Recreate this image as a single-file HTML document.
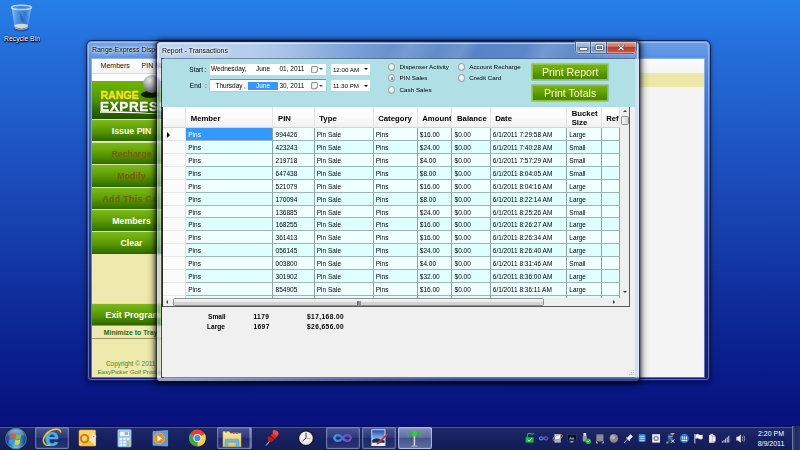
<!DOCTYPE html>
<html>
<head>
<meta charset="utf-8">
<title>Report - Transactions</title>
<style>
*{box-sizing:border-box;margin:0;padding:0}
html,body{width:800px;height:450px;overflow:hidden;background:#0b0f78}
body{font-family:"Liberation Sans",sans-serif;position:relative}
.abs{position:absolute}
#desk{position:absolute;left:0;top:0;width:800px;height:450px;overflow:hidden;
 background:linear-gradient(to bottom,#277fe8 0px,#246eda 50px,#205fcc 110px,#1b4ebc 170px,#1640ae 230px,#102f9d 290px,#0b208f 350px,#081682 400px,#08107c 426px)}
/* ---------- back window ---------- */
#w1{left:87px;top:41px;width:623px;height:340px;border-radius:5px 5px 3px 3px;
 background:linear-gradient(to bottom,#6a9fe8 0px,#5890e2 18px,#4179d3 60px,#2c5cbc 130px,#1e3fa2 200px,#14288c 270px,#0e1a7e 340px);
 box-shadow:0 0 0 1px rgba(10,20,70,.75),0 1px 5px 1px rgba(0,0,20,.45)}
#w1:before{content:"";position:absolute;left:1px;top:1px;right:1px;bottom:1px;border-radius:4px 4px 3px 3px;border:1px solid rgba(255,255,255,.35)}
.ttl{left:5px;top:4.5px;font-size:6.9px;color:#000;white-space:nowrap;text-shadow:0 0 5px #fff,0 0 3px rgba(255,255,255,.95),0 0 8px rgba(255,255,255,.85),0 0 2px rgba(255,255,255,.8)}
#c1{left:5px;top:18px;width:612px;height:318px;background:#f4f4f4;overflow:hidden;box-shadow:0 0 0 .8px rgba(225,235,255,.5)}
.mn{font-size:7px;color:#111;white-space:nowrap;line-height:8px}
#side{left:0;top:13.6px;width:80px;height:305px;background:#efe9ad;overflow:hidden}
#logo{left:0;top:8.4px;width:80px;height:37.8px;background:linear-gradient(to bottom,#6fb400 0,#5fa800 25%,#4a8c00 55%,#2f6400 80%,#245200 100%);overflow:hidden}
.sb{left:0;width:80px;height:22.8px;overflow:hidden;border-top:1.1px solid #d6e8a0;background:linear-gradient(to bottom,#7cb81e 0,#6aa80a 30%,#579600 55%,#3f7c00 80%,#2f6600 100%);color:#fff;font-weight:bold;font-size:8.8px;line-height:23.2px;text-align:center;white-space:nowrap;padding-right:1px}
.sb.dis{color:#7a5c12}
/* ---------- front window ---------- */
#w2{left:157px;top:42px;width:482px;height:339px;border-radius:4px 4px 3px 3px;
 box-shadow:0 0 0 .8px rgba(15,20,45,.6),0 1px 7px 3px rgba(0,0,10,.5),0 0 3px 1.5px rgba(0,0,10,.5)}
.gl{position:absolute;overflow:hidden}
#gt{left:0;top:0;width:482px;height:17px;border-radius:4px 4px 0 0;
 background:linear-gradient(to right,#b9d0ec 0,#b6ceeb 95px,#a4c0e6 135px,#84a8da 180px,#6790cc 235px,#5783c4 300px,#5d88c8 380px,#628cca 430px,#7a9fd6 482px)}
#gt:before{content:"";position:absolute;left:0;top:0;right:0;bottom:0;
 background:linear-gradient(115deg,rgba(255,255,255,0) 0,rgba(255,255,255,0) 48%,rgba(255,255,255,.13) 52%,rgba(255,255,255,.04) 58%,rgba(255,255,255,.15) 63%,rgba(255,255,255,0) 66%,rgba(255,255,255,0) 76%,rgba(255,255,255,.14) 80%,rgba(255,255,255,0) 86%)}
#gt:after{content:"";position:absolute;left:.8px;top:.8px;right:.8px;bottom:0;border-radius:3.4px 3.4px 0 0;border:.9px solid rgba(255,255,255,.6);border-bottom:0}
#gl{left:0;top:17px;width:4px;height:318px;background:rgba(175,195,215,.5);backdrop-filter:blur(1.8px);-webkit-backdrop-filter:blur(1.8px);border-left:.9px solid rgba(255,255,255,.2)}
#gl:after{content:"";position:absolute;left:1.6px;top:0;width:1.4px;height:100%;background:rgba(255,255,255,.28)}
#gr{left:478.2px;top:17px;width:3.8px;height:318px;background:linear-gradient(to right,#c2d8f2,#d4e6fa 45%,#cfe2f8 80%,#b8d0ee);border-right:.6px solid rgba(255,255,255,.4)}
#gb{left:0;top:334.4px;width:482px;height:4.6px;border-radius:0 0 3px 3px;background:linear-gradient(to right,rgba(255,255,255,.5) 0,rgba(255,255,255,.3) 110px,rgba(255,255,255,.08) 220px,rgba(255,255,255,0) 300px),linear-gradient(to bottom,#f2f6fb 0,#c3d0e8 15%,#6e83bc 38%,#33458c 64%,#27367c 86%,#7888c0 100%)}
#c2{left:5px;top:17px;width:473px;height:318px;background:#f0f0f0;overflow:hidden}
#c2b{left:3.9px;top:16.2px;width:474.6px;height:319.4px;background:linear-gradient(to right,rgba(10,20,20,.72) 0,rgba(10,20,20,.72) 3px,rgba(60,80,110,.55) 3px,rgba(60,80,110,.55) 100%)}
#pan{left:0;top:0;width:473px;height:47.5px;background:#b0e0e6}
.lb{font-size:6.5px;color:#000;white-space:nowrap;line-height:8px}
.dt{background:#fff;height:10.5px;font-size:6.5px;line-height:10.5px;color:#000;white-space:nowrap}
.dt span{position:absolute;top:0}
.rad{width:7.4px;height:7.4px;border-radius:50%;border:.8px solid #9a9c9c;background:radial-gradient(circle at 50% 40%,#fdfdfd 0,#e6e6e6 60%,#cfcfcf 100%)}
.rad.on:after{content:"";position:absolute;left:1.5px;top:1.5px;width:2.8px;height:2.8px;border-radius:50%;background:radial-gradient(circle at 40% 35%,#7fd4f5 0,#1c6fb5 70%,#13406b 100%)}
.btn{left:370px;width:76.3px;height:16.2px;background:linear-gradient(to bottom,#78b010 0,#6aa606 35%,#589600 60%,#4b8600 100%);border:.6px solid #8ec43a;
 color:#ffffc8;font-size:10.6px;line-height:15px;text-align:center;white-space:nowrap;box-shadow:0 0 0 .5px rgba(70,110,0,.5)}
#cap{left:418.6px;top:0;width:60px;height:10.6px;border-radius:0 0 3.5px 3.5px;box-shadow:0 0 0 .8px rgba(40,50,80,.8),0 0 0 1.5px rgba(255,255,255,.35)}
.cb{top:0;height:10.6px;background:linear-gradient(to bottom,#b4c8e6 0,#93aed6 45%,#6f8fc0 50%,#8eabd6 100%);border-right:.8px solid rgba(40,50,80,.7);box-shadow:inset 0 0 0 .7px rgba(255,255,255,.5)}
.cb.cx{background:linear-gradient(to bottom,#dca094 0,#cf6f62 45%,#b93a2e 50%,#c55c48 100%);border-right:0}
.th{border:.7px solid #8f8f8f;border-radius:1.5px;background:linear-gradient(to right,#f6f6f6 0,#e6e6e6 50%,#d2d2d2 100%)}
.th.h{background:linear-gradient(to bottom,#f8f8f8 0,#e9e9e9 45%,#d6d6d6 55%,#cfcfcf 100%)}
/* grid */
#grid{left:-.5px;top:48.2px;width:468.7px;height:200.3px;background:#fff;border:.9px solid #5a5a5a;border-left-color:#2a2a2a;border-top:0;overflow:hidden}
#gin{left:0;top:0;width:457.7px;height:190.4px;overflow:hidden}
.hdr{background:linear-gradient(to bottom,#fff 0,#fbfbfb 50%,#f0f0f0 100%);border-bottom:.7px solid #d5d5d5}
.hc{top:0;height:21.1px;font-weight:bold;font-size:7.75px;line-height:23.6px;padding-left:4.6px;color:#000;white-space:nowrap;border-right:.7px solid #e3e3e3;overflow:hidden}
.hc.two{line-height:8.8px;padding-top:2.9px}
.row{left:0;width:457.7px;height:12.88px}
.row .c{position:absolute;top:0;height:12.88px;font-size:6.5px;line-height:13.9px;padding-left:2.2px;white-space:nowrap;overflow:hidden;color:#000;border-right:.65px solid #8fa3a3;border-bottom:.6px solid #9fb4b4}
.ra .c{background:#f0ffff}
.rb .c{background:#e0ffff}
.row .c.rh{background:#fbfbfb;border-right:.7px solid #e0e0e0;border-bottom:.7px solid #e6e6e6}
.row .c.sel{background:#3399ff;color:#fff}
.cur{position:absolute;left:3.6px;top:3.4px;width:0;height:0;border-left:3.6px solid #000;border-top:3px solid transparent;border-bottom:3px solid transparent}
.tot{font-size:6.6px;font-weight:bold;color:#000;white-space:nowrap;line-height:8px}
.tb{top:.6px;height:22.8px;border:.8px solid rgba(150,165,215,.55);border-radius:2px;background:linear-gradient(to bottom,rgba(150,165,220,.36) 0,rgba(110,125,190,.26) 48%,rgba(60,75,145,.22) 52%,rgba(90,110,180,.28) 100%);box-shadow:inset 0 0 0 .6px rgba(255,255,255,.14)}
.tb.act{background:linear-gradient(to bottom,rgba(200,210,240,.62) 0,rgba(160,175,220,.52) 48%,rgba(120,135,190,.5) 52%,rgba(150,170,220,.56) 100%);border-color:rgba(200,210,240,.7)}
#tbar{left:0;top:426px;width:800px;height:24px;background:linear-gradient(to bottom,#070b58 0,#0a0f5c .7px,#56619f .9px,#4a5596 1.7px,#1e2968 2.1px,#172060 12px,#141b58 24px)}
</style>
</head>
<body>
<div id="desk">

<!-- RECYCLE BIN -->
<svg class="abs" style="left:8px;top:2px" width="28" height="32" viewBox="0 0 28 32">
  <defs><linearGradient id="bin" x1="0" y1="0" x2="1" y2="0"><stop offset="0" stop-color="#b8d8f4" stop-opacity=".75"/><stop offset=".35" stop-color="#5a9ae0" stop-opacity=".55"/><stop offset=".7" stop-color="#3a7ad0" stop-opacity=".6"/><stop offset="1" stop-color="#a8ccf0" stop-opacity=".75"/></linearGradient></defs>
  <ellipse cx="13.400" cy="27" rx="7.500" ry="2.600" fill="#10306a" opacity=".45"/>
  <path d="M3.600 5.600 L6.800 26.400 Q13.400 29.400 19.600 26.400 L23.400 5.600 Z" fill="url(#bin)"/>
  <path d="M11.400 10 l3.400 5.600 l1.600 4.400 l-3.400-1.200 l-.6-4z" fill="#2a5ab8" opacity=".8"/>
  <path d="M6.600 22.800 Q13.400 20.600 19.800 22.800 L19.400 26.200 Q13.400 29 7 26.200Z" fill="#e4e4e0" opacity=".9"/>
  <path d="M7 25.600 Q13.400 28.600 19.500 25.600" stroke="#7a7a78" stroke-width=".9" fill="none"/>
  <ellipse cx="13.500" cy="5.400" rx="10" ry="2.200" fill="#4a8ad8" fill-opacity=".5" stroke="#c2d2e6" stroke-width="1.500"/>
  <path d="M3.600 5.800 q1 .8 2.200 1.200" stroke="#fff" stroke-width=".6" fill="none"/>
</svg>
<div class="abs" style="left:0;top:35px;width:44px;text-align:center;font-size:6.8px;color:#fff;white-space:nowrap;line-height:8px;text-shadow:0 .7px 1.500px #000,0 0 2px rgba(0,0,0,.9),.6px .6px 1px #000">Recycle Bin</div>

<!-- BACK WINDOW -->
<div id="w1" class="abs">
  <div class="ttl abs">Range-Express Dispenser</div>
  <div id="c1" class="abs">
    <div class="abs" style="left:0;top:0;width:612px;height:14px;background:linear-gradient(to bottom,#fdfdfd,#f4f4f4)"></div>
    <div class="mn abs" style="left:8.6px;top:2.8px">Members</div>
    <div class="mn abs" style="left:49.6px;top:2.8px">PIN Manager</div>
    <div class="abs" style="left:0;top:13.6px;width:612px;height:14px;background:#ede8a8"></div>
    <div id="side" class="abs">
      <div class="abs" style="left:0;top:0;width:80px;height:1.4px;background:#e8e0a0"></div>
      <div class="abs" style="left:0;top:1.4px;width:80px;height:7px;background:#fff"></div>
      <div id="logo" class="abs">
        <div class="abs" style="left:49px;top:10px;width:18px;height:7px;border-radius:50%;background:#0c1c00;filter:blur(.7px)"></div>
        <div class="abs" style="left:8.4px;top:9.2px;font-size:10.6px;font-weight:bold;color:#f8e41c;-webkit-text-stroke:.3px #f8e41c;letter-spacing:0;line-height:10px;transform:scaleX(1.0);transform-origin:0 0">RANGE</div>
        <div class="abs" style="left:8.2px;top:19.6px;font-size:13px;font-weight:bold;color:#fff;-webkit-text-stroke:.35px #fff;line-height:12px;letter-spacing:.6px;transform:scaleX(1.04);transform-origin:0 0">EXPRESS</div>
        <svg class="abs" style="left:7px;top:29.4px" width="75" height="8" viewBox="0 0 75 8"><path d="M1 1.2 Q35 0.6 74 5.2 Q35 2.6 1 2.8 Z" fill="#fff"/></svg>
      </div>
      <div class="abs" style="left:50.6px;top:2.2px;width:18.6px;height:18.6px;border-radius:50%;background:radial-gradient(circle at 40% 28%,#efefef 0,#c4c4c4 26%,#858585 58%,#3a3a3a 100%)"></div>
      <div class="sb abs" style="top:46px">Issue PIN</div>
      <div class="sb dis abs" style="top:69.2px">Recharge</div>
      <div class="sb dis abs" style="top:91.6px">Modify</div>
      <div class="sb dis abs" style="top:114.2px;text-align:left;padding-left:10.4px;letter-spacing:.35px">Add This Card</div>
      <div class="sb abs" style="top:136.4px">Members</div>
      <div class="sb abs" style="top:158.8px;height:23px;line-height:22.4px">Clear</div>
      <div class="sb abs" style="top:230.4px;height:21.8px;text-align:left;padding-left:13.6px">Exit Program</div>
      <div class="abs" style="left:0;top:252.2px;width:80px;height:14.4px;border-top:.8px solid #9a9660;border-bottom:.8px solid #9a9660;font-size:6.9px;font-weight:bold;color:#1a6a1a;line-height:13.4px;padding-left:11.8px;white-space:nowrap">Minimize to Tray</div>
      <div class="abs" style="left:14px;top:287.4px;font-size:6.4px;color:#3a8a2a;white-space:nowrap;line-height:8px">Copyright &copy; 2011</div>
      <div class="abs" style="left:5.4px;top:295.6px;font-size:6.15px;color:#3a8a2a;white-space:nowrap;line-height:8px">EasyPicker Golf Products</div>
    </div>
</div>
</div>

<!-- FRONT WINDOW -->
<div id="w2" class="abs">
  <div id="gt" class="gl"></div><div id="gl" class="gl"></div><div id="gr" class="gl"></div><div id="gb" class="gl"></div>
  <div id="c2b" class="abs"></div>
  <div class="ttl abs">Report - Transactions</div>
  <div id="cap" class="abs">
    <div class="cb abs" style="left:0;width:15.8px;border-radius:0 0 0 3px"><i class="abs" style="left:4.8px;top:5.9px;width:6.4px;height:2px;background:#fff;box-shadow:0 0 0 .5px #45536b"></i></div>
    <div class="cb abs" style="left:15.8px;width:16px"><i class="abs" style="left:5px;top:3px;width:6.2px;height:5px;border:1.2px solid #fff;box-shadow:0 0 0 .5px #45536b, inset 0 0 0 .5px #45536b"></i></div>
    <div class="cb cx abs" style="left:31.8px;width:28.2px;border-radius:0 0 3px 0"><svg class="abs" style="left:11px;top:2.7px" width="6.2" height="5.6" viewBox="0 0 74 64"><path d="M8 6 L66 58 M66 6 L8 58" stroke="#3d2a2a" stroke-width="22" stroke-linecap="square"/><path d="M8 6 L66 58 M66 6 L8 58" stroke="#fff" stroke-width="13" stroke-linecap="square"/></svg></div>
  </div>
  <div id="c2" class="abs">
    <div id="pan" class="abs"></div>
    <div class="lb abs" style="left:27.3px;top:7.2px">Start :</div>
    <div class="lb abs" style="left:27.8px;top:23.3px">End &nbsp;:</div>
    <div class="dt abs" style="left:47.5px;top:4.7px;width:116.8px;height:11.2px;line-height:10.6px"><span style="left:1.4px">Wednesday,</span><span style="left:46.5px">June</span><span style="left:70px">01, 2011</span><svg class="abs" style="left:101px;top:2.2px" width="7.4" height="7.4" viewBox="0 0 72 72"><path d="M10 6 H58 Q66 6 66 14 V50 L50 66 H14 Q6 66 6 58 V14 Q6 6 10 6 Z" fill="#f4f4f4" stroke="#7d7d7d" stroke-width="9"/><path d="M66 50 H54 Q50 50 50 54 V66" fill="#ddd" stroke="#8a8a8a" stroke-width="5"/></svg><i class="abs" style="left:109.3px;top:4.7px;border-top:2.3px solid #2a5a9c;border-left:2.1px solid transparent;border-right:2.1px solid transparent"></i></div>
    <div class="dt abs" style="left:47.5px;top:21.2px;width:116.8px;height:11.2px;line-height:11.8px;box-shadow:0 -.7px 0 #3c7fb1,0 0 0 .4px rgba(60,127,177,.35)"><span style="left:6px">Thursday</span><span style="left:34.5px">,</span><span style="left:38.5px;width:30px;height:8.4px;top:1.6px;line-height:8.6px;background:#3399ff;color:#fff;text-align:center">June</span><span style="left:70px">30, 2011</span><svg class="abs" style="left:101px;top:2.2px" width="7.4" height="7.4" viewBox="0 0 72 72"><path d="M10 6 H58 Q66 6 66 14 V50 L50 66 H14 Q6 66 6 58 V14 Q6 6 10 6 Z" fill="#f4f4f4" stroke="#7d7d7d" stroke-width="9"/><path d="M66 50 H54 Q50 50 50 54 V66" fill="#ddd" stroke="#8a8a8a" stroke-width="5"/></svg><i class="abs" style="left:109.3px;top:4.7px;border-top:2.3px solid #2a5a9c;border-left:2.1px solid transparent;border-right:2.1px solid transparent"></i></div>
    <div class="dt abs" style="left:169px;top:4.7px;width:39.2px;height:11.2px;line-height:11.6px"><span style="left:1.9px;font-size:6.2px">12:00 AM</span><i class="abs" style="left:32.8px;top:4.7px;border-top:2.3px solid #000;border-left:2.2px solid transparent;border-right:2.2px solid transparent"></i></div>
    <div class="dt abs" style="left:169px;top:21px;width:39.2px;height:10.8px;line-height:11px"><span style="left:1.9px;font-size:6.2px">11:30 PM</span><i class="abs" style="left:32.8px;top:4.7px;border-top:2.3px solid #000;border-left:2.2px solid transparent;border-right:2.2px solid transparent"></i></div>

    <div class="rad abs" style="left:226px;top:4.2px"></div>
    <div class="rad on abs" style="left:226px;top:15.4px"></div>
    <div class="rad abs" style="left:226px;top:27.3px"></div>
    <div class="rad abs" style="left:295.7px;top:4.2px"></div>
    <div class="rad abs" style="left:295.7px;top:15.4px"></div>
    <div class="lb abs" style="left:237.6px;top:3.8px;font-size:6.25px">Dispenser Activity</div>
    <div class="lb abs" style="left:237.6px;top:15.1px;font-size:6.25px">PIN Sales</div>
    <div class="lb abs" style="left:237.6px;top:27px;font-size:6.25px">Cash Sales</div>
    <div class="lb abs" style="left:307.3px;top:3.8px;font-size:6.25px">Account Recharge</div>
    <div class="lb abs" style="left:307.3px;top:15.1px;font-size:6.25px">Credit Card</div>

    <div class="btn abs" style="top:4.8px">Print Report</div>
    <div class="btn abs" style="top:26.1px">Print Totals</div>

    <div id="grid" class="abs">
      <div id="gin" class="abs">
<div class="hdr abs" style="left:0;top:0;width:457.8px;height:21.1px"></div>
<div class="hc abs" style="left:0.6px;width:23.0px"></div>
<div class="hc abs" style="left:23.6px;width:87.3px">Member</div>
<div class="hc abs" style="left:110.9px;width:41.2px">PIN</div>
<div class="hc abs" style="left:152.1px;width:59.0px">Type</div>
<div class="hc abs" style="left:211.1px;width:44.0px">Category</div>
<div class="hc abs" style="left:255.1px;width:34.8px">Amount</div>
<div class="hc abs" style="left:289.9px;width:38.2px">Balance</div>
<div class="hc abs" style="left:328.1px;width:76.5px">Date</div>
<div class="hc abs two" style="left:404.6px;width:34.5px">Bucket<br>Size</div>
<div class="hc abs" style="left:439.1px;width:18.7px">Ref</div>
<div class="row abs ra" style="top:21.10px">
<div class="c rh" style="left:0.6px;width:23.0px"><i class="cur"></i></div>
<div class="c sel" style="left:23.6px;width:87.3px">Pins</div>
<div class="c" style="left:110.9px;width:41.2px">994426</div>
<div class="c" style="left:152.1px;width:59.0px">Pin Sale</div>
<div class="c" style="left:211.1px;width:44.0px">Pins</div>
<div class="c" style="left:255.1px;width:34.8px">$16.00</div>
<div class="c" style="left:289.9px;width:38.2px">$0.00</div>
<div class="c" style="left:328.1px;width:76.5px">6/1/2011 7:29:58 AM</div>
<div class="c" style="left:404.6px;width:34.5px">Large</div>
<div class="c" style="left:439.1px;width:18.7px"></div>
</div>
<div class="row abs rb" style="top:33.98px">
<div class="c rh" style="left:0.6px;width:23.0px"></div>
<div class="c" style="left:23.6px;width:87.3px">Pins</div>
<div class="c" style="left:110.9px;width:41.2px">423243</div>
<div class="c" style="left:152.1px;width:59.0px">Pin Sale</div>
<div class="c" style="left:211.1px;width:44.0px">Pins</div>
<div class="c" style="left:255.1px;width:34.8px">$24.00</div>
<div class="c" style="left:289.9px;width:38.2px">$0.00</div>
<div class="c" style="left:328.1px;width:76.5px">6/1/2011 7:40:28 AM</div>
<div class="c" style="left:404.6px;width:34.5px">Small</div>
<div class="c" style="left:439.1px;width:18.7px"></div>
</div>
<div class="row abs ra" style="top:46.86px">
<div class="c rh" style="left:0.6px;width:23.0px"></div>
<div class="c" style="left:23.6px;width:87.3px">Pins</div>
<div class="c" style="left:110.9px;width:41.2px">219718</div>
<div class="c" style="left:152.1px;width:59.0px">Pin Sale</div>
<div class="c" style="left:211.1px;width:44.0px">Pins</div>
<div class="c" style="left:255.1px;width:34.8px">$4.00</div>
<div class="c" style="left:289.9px;width:38.2px">$0.00</div>
<div class="c" style="left:328.1px;width:76.5px">6/1/2011 7:57:29 AM</div>
<div class="c" style="left:404.6px;width:34.5px">Small</div>
<div class="c" style="left:439.1px;width:18.7px"></div>
</div>
<div class="row abs rb" style="top:59.74px">
<div class="c rh" style="left:0.6px;width:23.0px"></div>
<div class="c" style="left:23.6px;width:87.3px">Pins</div>
<div class="c" style="left:110.9px;width:41.2px">647438</div>
<div class="c" style="left:152.1px;width:59.0px">Pin Sale</div>
<div class="c" style="left:211.1px;width:44.0px">Pins</div>
<div class="c" style="left:255.1px;width:34.8px">$8.00</div>
<div class="c" style="left:289.9px;width:38.2px">$0.00</div>
<div class="c" style="left:328.1px;width:76.5px">6/1/2011 8:04:05 AM</div>
<div class="c" style="left:404.6px;width:34.5px">Small</div>
<div class="c" style="left:439.1px;width:18.7px"></div>
</div>
<div class="row abs ra" style="top:72.62px">
<div class="c rh" style="left:0.6px;width:23.0px"></div>
<div class="c" style="left:23.6px;width:87.3px">Pins</div>
<div class="c" style="left:110.9px;width:41.2px">521079</div>
<div class="c" style="left:152.1px;width:59.0px">Pin Sale</div>
<div class="c" style="left:211.1px;width:44.0px">Pins</div>
<div class="c" style="left:255.1px;width:34.8px">$16.00</div>
<div class="c" style="left:289.9px;width:38.2px">$0.00</div>
<div class="c" style="left:328.1px;width:76.5px">6/1/2011 8:04:16 AM</div>
<div class="c" style="left:404.6px;width:34.5px">Large</div>
<div class="c" style="left:439.1px;width:18.7px"></div>
</div>
<div class="row abs rb" style="top:85.50px">
<div class="c rh" style="left:0.6px;width:23.0px"></div>
<div class="c" style="left:23.6px;width:87.3px">Pins</div>
<div class="c" style="left:110.9px;width:41.2px">170094</div>
<div class="c" style="left:152.1px;width:59.0px">Pin Sale</div>
<div class="c" style="left:211.1px;width:44.0px">Pins</div>
<div class="c" style="left:255.1px;width:34.8px">$8.00</div>
<div class="c" style="left:289.9px;width:38.2px">$0.00</div>
<div class="c" style="left:328.1px;width:76.5px">6/1/2011 8:22:14 AM</div>
<div class="c" style="left:404.6px;width:34.5px">Large</div>
<div class="c" style="left:439.1px;width:18.7px"></div>
</div>
<div class="row abs ra" style="top:98.38px">
<div class="c rh" style="left:0.6px;width:23.0px"></div>
<div class="c" style="left:23.6px;width:87.3px">Pins</div>
<div class="c" style="left:110.9px;width:41.2px">136885</div>
<div class="c" style="left:152.1px;width:59.0px">Pin Sale</div>
<div class="c" style="left:211.1px;width:44.0px">Pins</div>
<div class="c" style="left:255.1px;width:34.8px">$24.00</div>
<div class="c" style="left:289.9px;width:38.2px">$0.00</div>
<div class="c" style="left:328.1px;width:76.5px">6/1/2011 8:25:26 AM</div>
<div class="c" style="left:404.6px;width:34.5px">Small</div>
<div class="c" style="left:439.1px;width:18.7px"></div>
</div>
<div class="row abs rb" style="top:111.26px">
<div class="c rh" style="left:0.6px;width:23.0px"></div>
<div class="c" style="left:23.6px;width:87.3px">Pins</div>
<div class="c" style="left:110.9px;width:41.2px">168255</div>
<div class="c" style="left:152.1px;width:59.0px">Pin Sale</div>
<div class="c" style="left:211.1px;width:44.0px">Pins</div>
<div class="c" style="left:255.1px;width:34.8px">$16.00</div>
<div class="c" style="left:289.9px;width:38.2px">$0.00</div>
<div class="c" style="left:328.1px;width:76.5px">6/1/2011 8:26:27 AM</div>
<div class="c" style="left:404.6px;width:34.5px">Large</div>
<div class="c" style="left:439.1px;width:18.7px"></div>
</div>
<div class="row abs ra" style="top:124.14px">
<div class="c rh" style="left:0.6px;width:23.0px"></div>
<div class="c" style="left:23.6px;width:87.3px">Pins</div>
<div class="c" style="left:110.9px;width:41.2px">361413</div>
<div class="c" style="left:152.1px;width:59.0px">Pin Sale</div>
<div class="c" style="left:211.1px;width:44.0px">Pins</div>
<div class="c" style="left:255.1px;width:34.8px">$16.00</div>
<div class="c" style="left:289.9px;width:38.2px">$0.00</div>
<div class="c" style="left:328.1px;width:76.5px">6/1/2011 8:26:34 AM</div>
<div class="c" style="left:404.6px;width:34.5px">Large</div>
<div class="c" style="left:439.1px;width:18.7px"></div>
</div>
<div class="row abs rb" style="top:137.02px">
<div class="c rh" style="left:0.6px;width:23.0px"></div>
<div class="c" style="left:23.6px;width:87.3px">Pins</div>
<div class="c" style="left:110.9px;width:41.2px">056145</div>
<div class="c" style="left:152.1px;width:59.0px">Pin Sale</div>
<div class="c" style="left:211.1px;width:44.0px">Pins</div>
<div class="c" style="left:255.1px;width:34.8px">$24.00</div>
<div class="c" style="left:289.9px;width:38.2px">$0.00</div>
<div class="c" style="left:328.1px;width:76.5px">6/1/2011 8:26:40 AM</div>
<div class="c" style="left:404.6px;width:34.5px">Large</div>
<div class="c" style="left:439.1px;width:18.7px"></div>
</div>
<div class="row abs ra" style="top:149.90px">
<div class="c rh" style="left:0.6px;width:23.0px"></div>
<div class="c" style="left:23.6px;width:87.3px">Pins</div>
<div class="c" style="left:110.9px;width:41.2px">003800</div>
<div class="c" style="left:152.1px;width:59.0px">Pin Sale</div>
<div class="c" style="left:211.1px;width:44.0px">Pins</div>
<div class="c" style="left:255.1px;width:34.8px">$4.00</div>
<div class="c" style="left:289.9px;width:38.2px">$0.00</div>
<div class="c" style="left:328.1px;width:76.5px">6/1/2011 8:31:46 AM</div>
<div class="c" style="left:404.6px;width:34.5px">Small</div>
<div class="c" style="left:439.1px;width:18.7px"></div>
</div>
<div class="row abs rb" style="top:162.78px">
<div class="c rh" style="left:0.6px;width:23.0px"></div>
<div class="c" style="left:23.6px;width:87.3px">Pins</div>
<div class="c" style="left:110.9px;width:41.2px">301902</div>
<div class="c" style="left:152.1px;width:59.0px">Pin Sale</div>
<div class="c" style="left:211.1px;width:44.0px">Pins</div>
<div class="c" style="left:255.1px;width:34.8px">$32.00</div>
<div class="c" style="left:289.9px;width:38.2px">$0.00</div>
<div class="c" style="left:328.1px;width:76.5px">6/1/2011 8:36:00 AM</div>
<div class="c" style="left:404.6px;width:34.5px">Large</div>
<div class="c" style="left:439.1px;width:18.7px"></div>
</div>
<div class="row abs ra" style="top:175.66px">
<div class="c rh" style="left:0.6px;width:23.0px"></div>
<div class="c" style="left:23.6px;width:87.3px">Pins</div>
<div class="c" style="left:110.9px;width:41.2px">854905</div>
<div class="c" style="left:152.1px;width:59.0px">Pin Sale</div>
<div class="c" style="left:211.1px;width:44.0px">Pins</div>
<div class="c" style="left:255.1px;width:34.8px">$16.00</div>
<div class="c" style="left:289.9px;width:38.2px">$0.00</div>
<div class="c" style="left:328.1px;width:76.5px">6/1/2011 8:36:11 AM</div>
<div class="c" style="left:404.6px;width:34.5px">Large</div>
<div class="c" style="left:439.1px;width:18.7px"></div>
</div>
<div class="row abs rb" style="top:188.54px">
<div class="c rh" style="left:0.6px;width:23.0px"></div>
<div class="c" style="left:23.6px;width:87.3px"></div>
<div class="c" style="left:110.9px;width:41.2px"></div>
<div class="c" style="left:152.1px;width:59.0px"></div>
<div class="c" style="left:211.1px;width:44.0px"></div>
<div class="c" style="left:255.1px;width:34.8px"></div>
<div class="c" style="left:289.9px;width:38.2px"></div>
<div class="c" style="left:328.1px;width:76.5px"></div>
<div class="c" style="left:404.6px;width:34.5px"></div>
<div class="c" style="left:439.1px;width:18.7px"></div>
</div>
      </div>
      <div class="abs" style="left:457.7px;top:0;width:9.2px;height:190.4px;background:#efefef">
        <i class="abs" style="left:2.5px;top:3.2px;border-bottom:2.2px solid #444;border-left:2px solid transparent;border-right:2px solid transparent"></i>
        <div class="abs th" style="left:.6px;top:8.8px;width:8px;height:9.2px"></div>
        <i class="abs" style="left:2.5px;top:184.2px;border-top:2.2px solid #333;border-left:2px solid transparent;border-right:2px solid transparent"></i>
      </div>
      <div class="abs" style="left:0;top:190.4px;width:457.7px;height:9.5px;background:#efefef">
        <i class="abs" style="left:3.2px;top:2.6px;border-right:2.2px solid #444;border-top:2px solid transparent;border-bottom:2px solid transparent"></i>
        <div class="abs th h" style="left:10.2px;top:.6px;width:371px;height:8.2px"><i class="abs" style="left:183.5px;top:2.3px;width:.7px;height:3.2px;background:#666;box-shadow:1.3px 0 0 #666,2.6px 0 0 #666"></i></div>
        <i class="abs" style="left:450.4px;top:2.6px;border-left:2.2px solid #333;border-top:2px solid transparent;border-bottom:2px solid transparent"></i>
      </div>
      <div class="abs" style="left:457.7px;top:190.4px;width:9.2px;height:9.5px;background:#f0f0f0"></div>
    </div>

    <i class="abs" style="left:468.6px;top:313.4px;width:.9px;height:.9px;background:#b8b8b8;box-shadow:1.8px 0 #b8b8b8,1.8px -1.8px #b8b8b8,0 1.8px #b8b8b8,1.8px 1.8px #b8b8b8,-1.8px 1.8px #b8b8b8"></i>
    <div class="tot abs" style="left:46px;top:253.6px">Small</div>
    <div class="tot abs" style="left:45px;top:263.8px">Large</div>
    <div class="tot abs" style="left:91.4px;top:253.6px;letter-spacing:.42px">1179</div>
    <div class="tot abs" style="left:91.4px;top:263.8px;letter-spacing:.42px">1697</div>
    <div class="tot abs" style="left:145px;top:253.6px;letter-spacing:.42px">$17,168.00</div>
    <div class="tot abs" style="left:145px;top:263.8px;letter-spacing:.42px">$26,656.00</div>
  </div>
</div>

<!-- TASKBAR -->
<div id="tbar" class="abs">
  <div class="tb abs" style="left:35.2px;width:34px"></div>
  <div class="tb abs" style="left:216.7px;width:34px"></div>
  <div class="tb abs" style="left:248.6px;width:3.4px;border-left:0;border-radius:0 2px 2px 0"></div>
  <div class="tb abs" style="left:325.7px;width:34px"></div>
  <div class="tb abs" style="left:362px;width:33.8px"></div>
  <div class="tb act abs" style="left:398px;width:33.8px"></div>
  <svg class="abs" style="left:0;top:0" width="800" height="24" viewBox="0 426 800 24">
    <defs>
      <radialGradient id="orb" cx="50%" cy="45%" r="55%"><stop offset="0" stop-color="#4a9ad8"/><stop offset=".55" stop-color="#2a6cb4"/><stop offset=".85" stop-color="#174684"/><stop offset="1" stop-color="#0e2c5c"/></radialGradient><radialGradient id="orb2" cx="50%" cy="95%" r="50%"><stop offset="0" stop-color="#6fe0ff" stop-opacity=".9"/><stop offset="1" stop-color="#6fe0ff" stop-opacity="0"/></radialGradient><linearGradient id="orb3" x1="0" y1="0" x2="0" y2="1"><stop offset="0" stop-color="#fff" stop-opacity=".55"/><stop offset="1" stop-color="#fff" stop-opacity=".05"/></linearGradient>
      <radialGradient id="clk" cx="50%" cy="45%" r="60%"><stop offset="0" stop-color="#fff"/><stop offset=".8" stop-color="#e4e4e8"/><stop offset="1" stop-color="#b8b8c0"/></radialGradient>
      <linearGradient id="fold" x1="0" y1="0" x2="0" y2="1"><stop offset="0" stop-color="#fbe9a0"/><stop offset="1" stop-color="#e9c452"/></linearGradient>
      <linearGradient id="inf" x1="0" y1="0" x2="1" y2="0"><stop offset="0" stop-color="#3aa0e8"/><stop offset=".5" stop-color="#4a6ad8"/><stop offset="1" stop-color="#8a3ab8"/></linearGradient>
      <linearGradient id="sky" x1="0" y1="0" x2="0" y2="1"><stop offset="0" stop-color="#1c4fa8"/><stop offset=".6" stop-color="#7fb0e8"/><stop offset="1" stop-color="#f4f8ff"/></linearGradient>
    </defs>
    <!-- start orb -->
    <circle cx="16" cy="438.6" r="11.2" fill="#0a1540" opacity=".7"/>
    <circle cx="16" cy="438.6" r="10.400" fill="url(#orb)" stroke="#6f98c8" stroke-width=".7"/><circle cx="16" cy="438.6" r="10" fill="url(#orb2)"/><path d="M6.600 436.600 A9.600 9.600 0 0 1 25.400 436.600 Q16 433.600 6.600 436.600Z" fill="url(#orb3)"/>
    <path d="M10.6 434.2 q2.4-1.4 4.8-.2 l-.9 4.3 q-2.4-1-4.8 .3z" fill="#e8582a"/>
    <path d="M16.5 434.4 q2.4 1.2 4.9-.3 l-.9 4.4 q-2.4 1.4-4.9 .2z" fill="#7cc242"/>
    <path d="M9.5 439.6 q2.4-1.3 4.8-.2 l-.9 4.3 q-2.4-1-4.8 .3z" fill="#3a9ae0"/>
    <path d="M15.4 439.8 q2.4 1.2 4.9-.3 l-.9 4.4 q-2.4 1.4-4.9 .2z" fill="#f8c828"/>
    <!-- IE -->
    <text x="44.400" y="445.800" font-family="Liberation Sans, sans-serif" font-size="26.500" font-weight="bold" fill="#42b0ee">e</text>
    <path d="M44.600 443.600 C41 440 46 431.500 53.500 429.600 C57.500 428.600 60.500 429.600 60.600 432" fill="none" stroke="#f2c21c" stroke-width="1.700" stroke-linecap="round"/>
    <path d="M44.600 443.600 C45.500 445.400 48 445.600 50 444.800" fill="none" stroke="#f2c21c" stroke-width="1.300" stroke-linecap="round"/>
    <!-- Outlook -->
    <rect x="79" y="430" width="16.6" height="16" rx="1.2" fill="#f8d66a" stroke="#e0a020" stroke-width=".6"/>
    <path d="M86 446 v-6 l9.6 -4 v10z" fill="#fbeaa8"/>
    <path d="M80 446 l8-7 l7.6 7z" fill="#f3c23c"/>
    <text x="79.4" y="442.6" font-family="Liberation Sans, sans-serif" font-size="13" font-weight="bold" fill="#d87410">O</text>
    <circle cx="93.6" cy="436.6" r="2.4" fill="#fff" stroke="#c8c8c8" stroke-width=".4"/>
    <path d="M92.9 435.4 l2 1.2 -2 1.2z" fill="#e08a20"/>
    <!-- Calculator -->
    <rect x="117.8" y="429.4" width="13.4" height="17.6" rx="1" fill="#a9d2f2" stroke="#5a94cc" stroke-width=".7"/>
    <rect x="119.6" y="431.2" width="9.8" height="5" fill="#eef6fc" stroke="#6a9ccc" stroke-width=".4"/>
    <rect x="124.6" y="432.2" width="3.6" height="2.6" fill="#9aa8b8"/>
    <g fill="#e8f2fb"><rect x="119.6" y="438" width="2.4" height="2"/><rect x="123.2" y="438" width="2.4" height="2"/><rect x="126.8" y="438" width="2.4" height="2"/><rect x="119.6" y="441" width="2.4" height="2"/><rect x="123.2" y="441" width="2.4" height="2"/><rect x="119.6" y="444" width="2.4" height="2"/><rect x="123.2" y="444" width="2.4" height="2"/></g>
    <rect x="126.8" y="441" width="2.4" height="5" fill="#f0a838"/>
    <!-- Media player -->
    <path d="M153 431.6 l14.6 -1 v15.4 l-14.6 -.8z" fill="#5a9ad8" stroke="#8ac0ee" stroke-width=".6"/>
    <circle cx="159.2" cy="438.4" r="5.4" fill="#f08a18" stroke="#f8c070" stroke-width=".6"/>
    <path d="M157.4 435.4 l5 3 -5 3z" fill="#fff"/>
    <!-- Chrome -->
    <circle cx="197.400" cy="438" r="8.400" fill="#e6402a"/>
    <path d="M197.400 438 L204.670 433.800 A8.400 8.400 0 0 1 197.400 446.400 Z" fill="#f6d23a"/>
    <path d="M197.400 438 L197.400 446.400 A8.400 8.400 0 0 1 190.130 433.800 Z" fill="#3aaa48"/>
    <path d="M197.400 438 L204.670 433.800 L197.400 433.800Z" fill="#e6402a"/>
    <circle cx="197.400" cy="438" r="4" fill="#f4f4f4"/>
    <circle cx="197.400" cy="438" r="3.100" fill="#4a8ae0"/>
    <!-- Explorer folder -->
    <path d="M223 431.6 h6 l1.4 1.6 h10.6 v13.6 h-18z" fill="url(#fold)" stroke="#d8b040" stroke-width=".5"/>
    <rect x="225" y="431" width="2" height="1.6" fill="#3aa845"/><rect x="233" y="432" width="2" height="1.6" fill="#e8402a"/><rect x="236" y="432.4" width="2" height="1.6" fill="#3a8ae0"/>
    <path d="M225 446.8 v-6.4 q0-1.2 1.2-1.2 h11.6 q1.2 0 1.2 1.2 v6.4 h-3 v-4.6 h-8 v4.6z" fill="#6ab8ea" stroke="#3a8ac8" stroke-width=".4"/>
    <!-- Pin -->
    <path d="M266 445.6 l4-5" stroke="#c8c8d0" stroke-width="1"/>
    <path d="M268 436.4 q3.4 -.4 6 3.6 q-1.6 2.6 -5.2 1.2 q-2-2-.8-4.8z" fill="#c81818"/>
    <path d="M270.6 435.6 l3.2-3.4 q3 .2 4 3.600 l-2.8 3.200z" fill="#e02828"/>
    <ellipse cx="275.6" cy="432.8" rx="3.3" ry="2.2" fill="#f04a3a" transform="rotate(38 275.6 432.8)"/>
    <!-- Clock -->
    <circle cx="306" cy="438.2" r="8.2" fill="#1a1a22"/>
    <circle cx="306" cy="438.2" r="6.8" fill="url(#clk)"/>
    <path d="M306 438.2 V432.8 M306 438.2 L302.6 441" stroke="#222" stroke-width=".9" fill="none"/>
    <path d="M306 438.2 L310.4 438.8" stroke="#c03030" stroke-width=".5"/>
    <!-- VS infinity -->
    <path d="M342.6 438 c-2.400-3.600 -7.200-4 -8.400 0 c1.200 4 6 3.600 8.400 0 c2.400-3.600 7.200-4 8.400 0 c-1.200 4 -6 3.600 -8.400 0z" fill="none" stroke="url(#inf)" stroke-width="2.300"/>
    <!-- Paint -->
    <rect x="371.4" y="429.4" width="14" height="16.6" fill="#f4f4f4"/>
    <rect x="372.2" y="430.2" width="12.4" height="12.6" fill="url(#sky)"/>
    <path d="M372.2 440 q4-3 8-.6 l4.400 1 v2.400 h-12.400z" fill="#1a2a50"/>
    <path d="M374 445.600 l3-3 l10.400-9.400 l1 1 l-9.800 10z" fill="#d03030"/>
    <path d="M373.400 446 l2.400-3.400 l1.800 1.600z" fill="#e8e8e8"/>
    <!-- Range express antenna -->
    <path d="M414.400 436 v9" stroke="#d8d8d8" stroke-width="1.500"/>
    <path d="M410.600 446.400 q3.800-2.400 7.600 0z" fill="#c8c8c8"/>
    <circle cx="414.400" cy="433.800" r="2.500" fill="#28d828"/>
    <path d="M410.400 431.400 q-1.600 2.400 0 4.800 M408.600 430.600 q-2.200 3.200 0 6.400 M418.400 431.400 q1.600 2.400 0 4.800 M420.200 430.600 q2.200 3.200 0 6.400" stroke="#28c828" stroke-width=".7" fill="none"/>
    <!-- TRAY -->
    <g id="tray">
      <path d="M525.600 437.200 h8 v5.400 h-8z" fill="#18b838"/><path d="M527.400 437.200 v-3 q2.200-1.600 4.400 0 l2.400-.6" stroke="#18b838" stroke-width="1.100" fill="none"/><path d="M527.600 439.800 l1.400 1.400 2.600-2.800" stroke="#fff" stroke-width=".9" fill="none"/>
      <path d="M543.600 438.400 c-1.200-1.800 -3.600-2 -4.200 0 c.6 2 3 1.800 4.200 0 c1.200-1.800 3.600-2 4.200 0 c-.6 2 -3 1.800 -4.200 0z" fill="none" stroke="url(#inf)" stroke-width="1.300"/>
      <rect x="554.400" y="434" width="6.400" height="8.600" fill="#8ac0ee"/><rect x="555.200" y="435" width="4.800" height="4" fill="#eaf4fc"/><ellipse cx="557.600" cy="437.600" rx="5.200" ry="2.200" fill="none" stroke="#e88a28" stroke-width=".8" transform="rotate(-25 557.600 437.600)"/>
      <rect x="567.400" y="434.400" width="8.800" height="6.400" fill="#0c0c14" stroke="#3a4a6a" stroke-width=".5"/><path d="M569 439.400 l1.600-3 1.400 2 1.200-1.600 1.400 2.600z" fill="#5a9ae8"/><rect x="570.400" y="441.200" width="3" height="1.200" fill="#c8c8c8"/>
      <rect x="583.400" y="433" width="2.800" height="3" fill="#d8d8d8"/><rect x="582.800" y="435.800" width="4" height="5.800" rx=".6" fill="#9a9aa2"/><circle cx="588.200" cy="441.200" r="2.700" fill="#28b838"/><path d="M586.800 441.200 l1 1 1.800-2" stroke="#fff" stroke-width=".7" fill="none"/>
      <rect x="596.400" y="434.400" width="7" height="7" fill="#8a8a92"/><path d="M596.400 441.400 v1.600 h1.600 M603.400 441.400 v1.600 h-1.600" stroke="#d8d8d8" stroke-width=".8" fill="none"/>
      <circle cx="613.800" cy="438.400" r="4.300" fill="#8a8a8a"/><circle cx="612.800" cy="437.200" r="2.200" fill="#b0b0b0"/>
      <path d="M624 443 l3.200-3.600" stroke="#d8d8d8" stroke-width=".8"/><path d="M626 437.400 l4 3.600 M627 438.400 l3.400-3.600 l2 1.800 l-3.400 3.600z" stroke="#e8e8e8" stroke-width=".9" fill="#e8e8e8"/>
      <rect x="638.600" y="434" width="7" height="8" rx="1.400" fill="#2a8ae0"/><path d="M639.600 436.400 h5 M639.600 438.400 h5 M639.600 440.400 h5" stroke="#d8f0ff" stroke-width=".8"/>
      <rect x="652.200" y="434.200" width="7.800" height="8.400" fill="#f0f0f0"/><circle cx="656.100" cy="438.400" r="2.700" fill="#8a8a9a"/><circle cx="656.100" cy="438.400" r="1.200" fill="#f0f0f0"/>
      <rect x="667.600" y="434.400" width="5.800" height="7.400" fill="#2a4a8a"/><path d="M668.400 436.400 h4 M668.400 438 h3" stroke="#b8d8f8" stroke-width=".6"/><path d="M670 433 h5 l-2.500 2.400z" fill="#e8a020"/><path d="M671 439.400 l3.400 3.400 M674.400 439.400 l-3.400 3.400" stroke="#f0f0f0" stroke-width=".9"/><circle cx="667.400" cy="442.400" r="1.200" fill="#38c838"/>
      <circle cx="684.400" cy="438.400" r="4.600" fill="#2a7ae0"/><path d="M681.600 440.600 h5.600 M682.400 439.400 v-3 M684.400 439.400 v-3 M686.400 439.400 v-3" stroke="#fff" stroke-width=".9"/>
      <path d="M694.800 434 v9.400" stroke="#e8e8e8" stroke-width=".9"/><path d="M695.400 434.400 q2-1 3.600 0 t3.600 0 v4.400 q-2 1-3.600 0 t-3.600 0z" fill="#f4f4f4"/>
      <rect x="709" y="435" width="5.600" height="7.800" rx=".6" fill="#e8e8e8"/><rect x="710.400" y="433.800" width="2.800" height="1.800" fill="#c8c8c8"/><rect x="712.600" y="436.400" width="3" height="5" fill="#f8f8f8" stroke="#888" stroke-width=".4"/>
      <path d="M722.400 442.600 v-1.400 M724 442.600 v-2.600 M725.600 442.600 v-4 M727.200 442.600 v-5.400 M728.800 442.600 v-6.800" stroke="#d0d0d8" stroke-width="1"/>
      <path d="M736.400 436.800 h1.800 l2.600-2.400 v8.400 l-2.600-2.400 h-1.800z" fill="#f0f0f0"/><path d="M742.200 436.400 q1.400 2.200 0 4.400 M743.800 435.400 q2 3.200 0 6.400" stroke="#e0e0e0" stroke-width=".6" fill="none"/>
    </g>
  </svg>
  <div class="abs" style="left:746px;top:3.4px;width:50px;text-align:center;font-size:7px;line-height:9.3px;color:#fff;white-space:nowrap">2:20 PM<br>8/9/2011</div>
  <div class="abs" style="left:792.4px;top:0;width:7.6px;height:24px;background:linear-gradient(to right,#3a4680,#1e2860 40%,#2a3470);border-left:.7px solid #6a76a8"></div>
</div>

</div>
</body>
</html>
